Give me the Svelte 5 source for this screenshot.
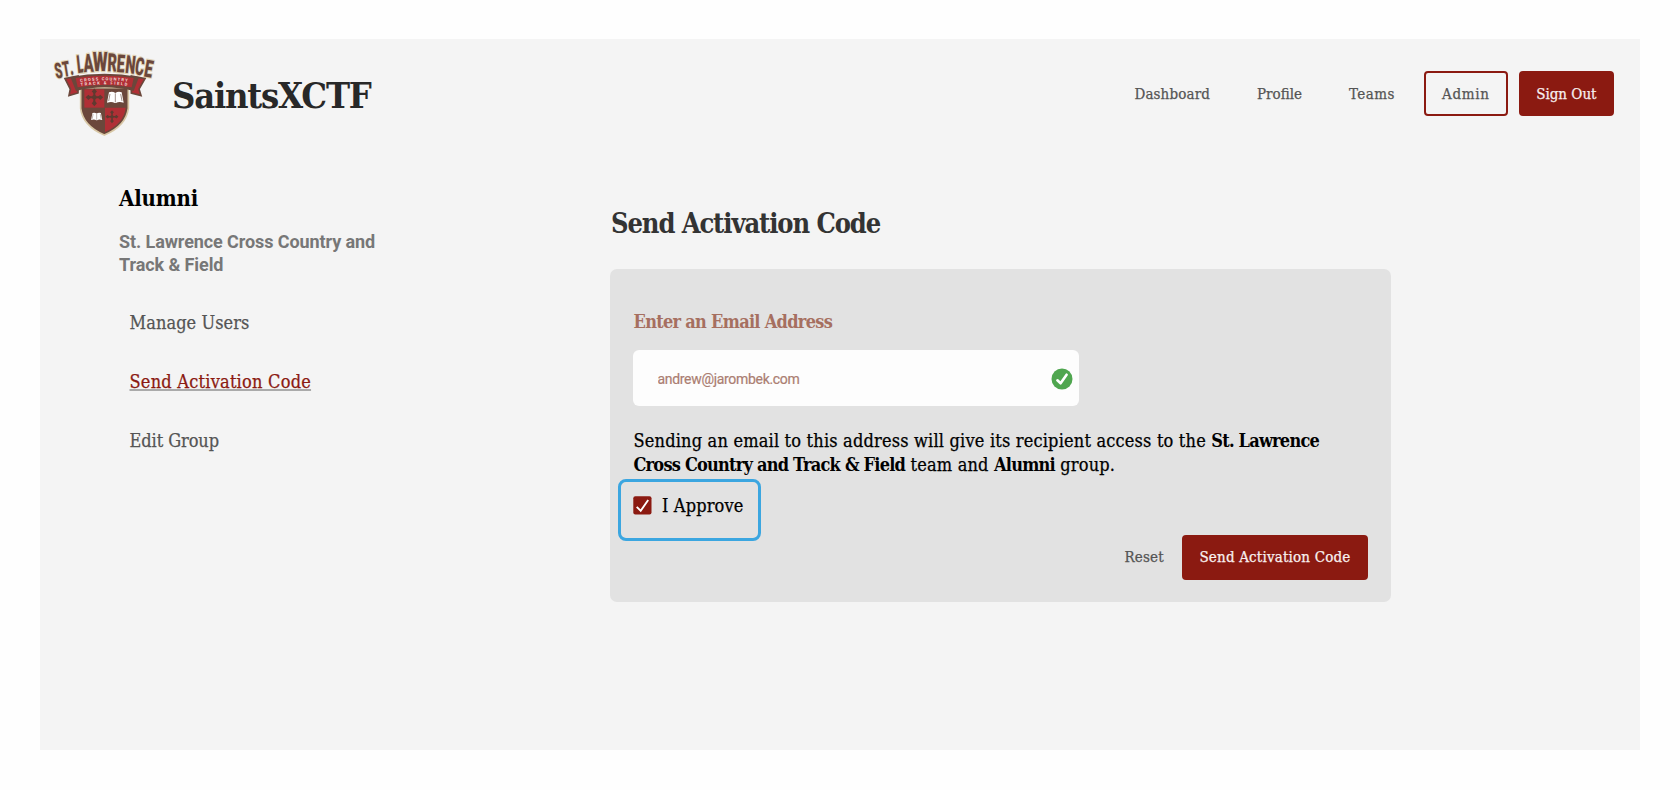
<script>
  const nav = [
    { label: 'Dashboard', kind: '', spacing: 0.13 },
    { label: 'Profile', kind: '', spacing: 0 },
    { label: 'Teams', kind: '', spacing: 0.48 },
    { label: 'Admin', kind: 'outlined', spacing: 0.7 },
    { label: 'Sign Out', kind: 'filled', spacing: 0 }
  ];
  const menu = [
    { label: 'Manage Users', active: false, spacing: 0.08 },
    { label: 'Send Activation Code', active: true, spacing: 0.23 },
    { label: 'Edit Group', active: false, spacing: -0.07 }
  ];
  let email = $state('andrew@jarombek.com');
  let approved = $state(true);

  // Arched wordmark: glyph, left, baseline, width, height, tilt
  const arch = [
    ['S', 34, 101, 22, 46, -11],
    ['T', 56, 96, 21, 46, -9],
    ['.', 77, 90, 11, 50, -8],
    ['L', 98, 84, 20, 53, -6],
    ['A', 117, 82, 30, 54, -3],
    ['W', 143, 79, 45, 54, 0],
    ['R', 187, 79, 28, 54, 2],
    ['E', 214, 81, 24, 53, 4],
    ['N', 239, 83, 30, 53, 6],
    ['C', 268, 88, 27, 52, 8],
    ['E', 295, 94, 25, 51, 10],
  ];
  const advance = { S: 19.9, T: 20.1, '.': 10.2, L: 17.6, A: 22, W: 28.1, R: 20.7, E: 18, N: 22.7, C: 21.4 };
</script>

{#snippet cross(x, y, s)}
  <g transform="translate({x} {y}) scale({s})" fill="#5f3a30">
    <path d="M-3-19H3V-3H19V3H3V19H-3V3H-19V-3H-3Z" />
    <path d="M0-27L8-18L0-10L-8-18ZM0 27L8 18L0 10L-8 18ZM-27 0L-18-8L-10 0L-18 8ZM27 0L18-8L10 0L18 8Z" />
    <circle r="7" />
  </g>
{/snippet}

{#snippet book(x, y, s)}
  <g transform="translate({x} {y}) scale({s})">
    <path d="M-19-15Q-9-19 0-13Q9-19 19-15L25 16Q10 12 2 17H-2Q-10 12-25 16Z" fill="#fff" />
    <path d="M0-12V15M-16-10L-20 11M16-10L20 11" stroke="#765b50" stroke-width="2" fill="none" />
  </g>
{/snippet}

<div class="page">
  <header>
    <svg class="logo" viewBox="0 0 360 300" role="img" aria-label="St. Lawrence">
      <g class="arch">
        {#each arch as [ch, x, y, w, h, tilt]}
          <text transform="translate({x} {y}) rotate({tilt}) scale({w / advance[ch]} {h / 22.8})">{ch}</text>
        {/each}
      </g>
      <path d="M107 128V190Q114 243 178 270Q243 243 250 190V128Z" fill="#6b473b" stroke="#d8c7a5" stroke-width="5" />
      <path d="M118 133H178V188H118Z" fill="#b02f35" />
      <path d="M180 188H242Q237 235 180 261Z" fill="#b02f35" />
      {@render cross(148, 157, 0.98)}
      {@render cross(201, 215, 0.72)}
      {@render book(211, 157, 1)}
      {@render book(155, 214, 0.67)}
      <path d="M60 101L99 93V144L72 152L76 132Z" fill="#b02f35" stroke="#6b473b" stroke-width="5" />
      <path d="M300 101L259 93V144L288 152L282 132Z" fill="#b02f35" stroke="#6b473b" stroke-width="5" />
      <path d="M76 96Q178 77 282 96L266 138Q178 116 93 138Z" fill="#6b473b" />
      <path d="M92 99Q178 86 266 99L260 127Q178 111 98 127Z" fill="#b02f35" />
      <path id="banner-top" d="M106 111Q178 101 254 111" fill="none" />
      <path id="banner-bottom" d="M107 123Q178 113 252 123" fill="none" />
      <g class="banner">
        <text><textPath href="#banner-top" textLength="142">CROSS COUNTRY</textPath></text>
        <text><textPath href="#banner-bottom" textLength="140">TRACK &amp; FIELD</textPath></text>
      </g>
    </svg>
    <h1>SaintsXCTF</h1>
    <nav>
      {#each nav as item}
        <button class="btn {item.kind}" style="letter-spacing: {item.spacing}px">{item.label}</button>
      {/each}
    </nav>
  </header>

  <div class="content">
    <aside>
      <h2>Alumni</h2>
      <h3>St. Lawrence Cross Country and Track &amp; Field</h3>
      <ul>
        {#each menu as item}
          <li><span class:active={item.active} style="letter-spacing: {item.spacing}px">{item.label}</span></li>
        {/each}
      </ul>
    </aside>

    <main>
      <h2>Send Activation Code</h2>
      <form onsubmit={(e) => e.preventDefault()}>
        <label class="title" for="email">Enter an Email Address</label>
        <div class="field">
          <input id="email" type="text" bind:value={email} spellcheck="false" />
          <svg width="22" height="22" viewBox="0 0 22 22">
            <circle cx="11" cy="11" r="10.5" fill="#4fa64f" />
            <path d="M6.4 12.3L9.6 15.3L15.6 6.7" fill="none" stroke="#fff" stroke-width="2.6" stroke-linecap="round" stroke-linejoin="round" />
          </svg>
        </div>
        <p>
          Sending an email to this address will give its recipient access to the <b>St. Lawrence
          Cross Country and Track &amp; Field</b> team and <b>Alumni</b> group.
        </p>
        <label class="approve">
          <input type="checkbox" bind:checked={approved} />
          <svg width="19" height="19" viewBox="0 0 19 19">
            <rect x=".3" y=".3" width="18.2" height="18.2" rx="2" fill="#8b1a11" />
            {#if approved}
              <path d="M3.7 10.8L7.7 14.8L15.2 4" fill="none" stroke="#fff" stroke-width="1.9" />
            {/if}
          </svg>
          <span>I Approve</span>
        </label>
        <div class="actions">
          <button type="reset" class="btn reset">Reset</button>
          <button type="submit" class="btn filled send">Send Activation Code</button>
        </div>
      </form>
    </main>
  </div>
</div>

<style>
  :global(body) { background: #fefefe; }
  .page {
    box-sizing: border-box;
    width: 1600px;
    height: 711px;
    margin: 39px 40px 40px;
    background: #f4f4f4;
    font-family: 'Roboto Slab', 'DejaVu Serif Condensed', 'DejaVu Serif', serif;
    color: #000;
  }
  h1, h2, h3, p, ul { margin: 0; padding: 0; }
  header { display: flex; align-items: center; height: 112px; padding: 0 26px 0 5px; }
  .logo { width: 120px; height: 100px; flex: none; }
  .arch text {
    font: 900 32px Roboto, sans-serif;
    fill: #6b473b;
    stroke: #dfd1b2;
    stroke-width: 3px;
    paint-order: stroke;
  }
  .banner text { font: 700 12.5px Roboto, sans-serif; fill: #f3dfdc; }
  h1 { margin-left: 7px; font-size: 36px; line-height: 42px; letter-spacing: -1.23px; color: #282828; }
  nav { display: flex; gap: 11px; margin: 0 0 3px auto; }
  .btn {
    height: 45px;
    padding: 0 16px;
    border: 2px solid transparent;
    border-radius: 4px;
    background: none;
    font-family: inherit;
    font-size: 15px;
    color: #555;
    white-space: nowrap;
    -webkit-text-stroke: 0.25px currentColor;
  }
  .outlined { border-color: #8b1a11; }
  .filled { padding: 0 15.5px; border-color: #8b1a11; background: #8b1a11; color: #f8f0ef; }

  .content { display: flex; }
  aside { width: 270px; padding: 33px 0 0 79px; }
  aside h2 { font-size: 22px; line-height: 28px; letter-spacing: -0.19px; }
  aside h3 {
    margin-top: 17.5px;
    font: 700 18px/23.5px Roboto, sans-serif;
    letter-spacing: -0.09px;
    color: #777;
  }
  ul { margin: 17.5px 0 0 10.5px; list-style: none; }
  li { height: 59px; font-size: 18px; line-height: 58px; color: #555; -webkit-text-stroke: 0.25px currentColor; }
  .active {
    color: #8b1a11;
    text-decoration: underline #aaa 1.5px;
    text-underline-offset: 1px;
    text-decoration-skip-ink: none;
  }

  main { width: 780.5px; margin-left: 221px; padding-top: 55px; }
  main h2 { padding-left: 1px; font-size: 27px; line-height: 36px; letter-spacing: -1.09px; color: #333; }
  form {
    box-sizing: border-box;
    height: 333px;
    margin-top: 27px;
    padding: 41px 22.5px 22.5px;
    border-radius: 7px;
    background: #e2e2e2;
  }
  .title { display: block; font-size: 18px; line-height: 24px; letter-spacing: -0.71px; color: #a66f60; padding-left: 1px; font-weight: 700; }
  .field {
    box-sizing: border-box;
    display: flex;
    align-items: center;
    width: 446.5px;
    height: 56px;
    margin-top: 16px;
    padding: 1px 6px 0 25px;
    border-radius: 6px;
    background: #fdfdfd;
  }
  .field input {
    flex: 1;
    min-width: 0;
    padding: 0;
    border: 0;
    outline: 0;
    background: none;
    font: 400 14px Roboto, sans-serif;
    letter-spacing: -0.31px;
    color: #ab7e72;
    -webkit-text-stroke: 0.2px currentColor;
  }
  p { margin-top: 23px; padding-left: 1px; width: 700px; font-size: 18px; line-height: 23.5px; letter-spacing: 0.19px; -webkit-text-stroke: 0.25px currentColor; }
  p b { letter-spacing: -0.78px; -webkit-text-stroke: 0; }
  .approve {
    box-sizing: border-box;
    display: flex;
    gap: 10.5px;
    width: 143px;
    height: 62.5px;
    margin: 2.5px 0 0 -14.5px;
    padding: 14.5px 11.5px;
    border: 3px solid #3ba6e0;
    border-radius: 8px;
    font-size: 18px;
    line-height: 19px;
    letter-spacing: 0.15px;
    white-space: nowrap;
    -webkit-text-stroke: 0.25px currentColor;
  }
  .approve input { position: absolute; opacity: 0; pointer-events: none; }
  .approve svg { flex: none; }
  .actions { display: flex; justify-content: flex-end; margin-top: -6.5px; }
  .reset { letter-spacing: 0.21px; }
  .send { letter-spacing: 0.18px; }
</style>
